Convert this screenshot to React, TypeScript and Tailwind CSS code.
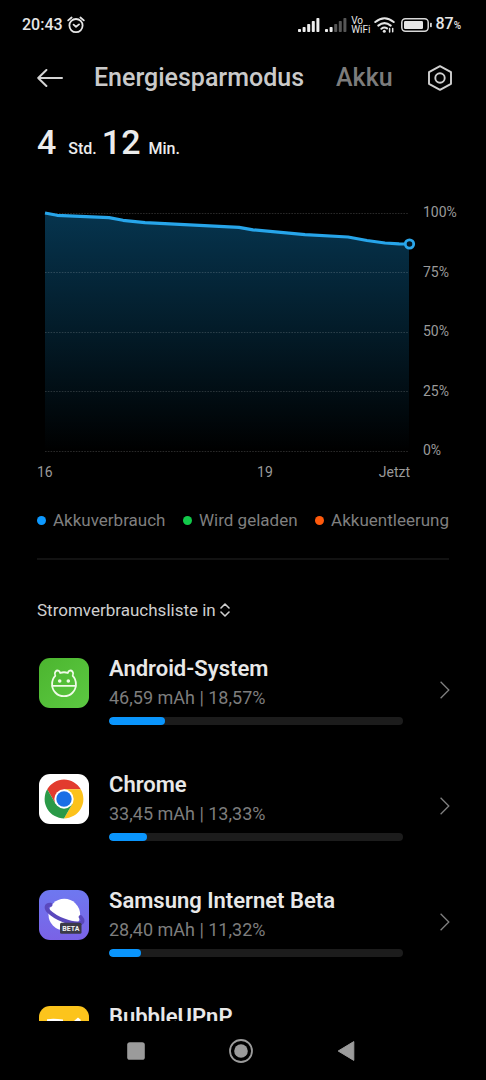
import type { ReactNode } from "react";

type AppUsage = {
  name: string;
  usage?: string;
  share?: number;
  icon: ReactNode;
};

const GRID = [12, 71, 131, 190, 250];
const LINE =
  "M8 12 L20 14.3 L72 16.6 L86 19.3 L108 21.6 L202 26.3 L216 28.8 L268 33.6 L311 36 L330 39.5 L348 42 L362 42.9 L372 43";

function AndroidIcon() {
  return (
    <svg viewBox="0 0 50 50" className="block size-[50px]" aria-hidden="true">
      <defs>
        <linearGradient id="android-bg" x1="0" y1="0" x2="1" y2="1">
          <stop offset="0" stopColor="#4cb52f" />
          <stop offset="1" stopColor="#5cc942" />
        </linearGradient>
      </defs>
      <rect width="50" height="50" rx="11" fill="url(#android-bg)" />
      <g fill="none" stroke="#f0fbe8" strokeWidth="1.8" strokeLinecap="round" strokeLinejoin="round">
        <path d="M16.3 17.8 C14.6 14.6 17.3 11.4 20 13 C20.8 13.5 21 14.5 21.2 15 C23.5 14.1 26.5 14.1 28.8 15 C29 14.5 29.2 13.5 30 13 C32.7 11.4 35.4 14.6 33.7 17.8 C36 20 36.9 22.7 36.9 26.2 C36.9 33 31.7 38.2 25 38.2 C18.3 38.2 13.1 33 13.1 26.2 C13.1 22.7 14 20 16.3 17.8 Z" />
        <path d="M13.3 27.8 H36.7" />
      </g>
      <circle cx="20.7" cy="23" r="1.8" fill="#f0fbe8" />
      <circle cx="29.3" cy="23" r="1.8" fill="#f0fbe8" />
    </svg>
  );
}

function ChromeIcon() {
  return (
    <svg viewBox="0 0 50 50" className="block size-[50px]" aria-hidden="true">
      <rect width="50" height="50" rx="11" fill="#ffffff" />
      <path d="M8.2 15.3 A19.4 19.4 0 0 1 41.8 15.3 L25 15.3 L16.6 29.85 Z" fill="#e23b2e" />
      <path d="M41.8 15.3 A19.4 19.4 0 0 1 25 44.4 L33.4 29.85 L25 15.3 Z" fill="#fcc21b" />
      <path d="M25 44.4 A19.4 19.4 0 0 1 8.2 15.3 L16.6 29.85 L33.4 29.85 Z" fill="#2a9a48" />
      <circle cx="25" cy="25" r="9.7" fill="#ffffff" />
      <circle cx="25" cy="25" r="7.7" fill="#1a6fe6" />
    </svg>
  );
}

function SamsungInternetIcon() {
  return (
    <svg viewBox="0 0 50 50" className="block size-[50px]" aria-hidden="true">
      <defs>
        <linearGradient id="samsung-bg" x1="0" y1="0" x2="0" y2="1">
          <stop offset="0" stopColor="#6e78f0" />
          <stop offset="1" stopColor="#7a62e6" />
        </linearGradient>
      </defs>
      <rect width="50" height="50" rx="11" fill="url(#samsung-bg)" />
      <circle cx="25.3" cy="24.6" r="15.8" fill="#ffffff" />
      <path
        d="M11.5 14.8 C6.8 14.6 6.6 18 9.8 21.4 C17 28.6 32 34.4 40.5 33.4 C44.3 32.8 44.4 30 41.6 27"
        fill="none"
        stroke="#5a48bd"
        strokeWidth="4"
        strokeLinecap="round"
      />
      <rect x="21" y="32.8" width="21.5" height="11" rx="1.5" fill="#3b3a48" />
      <text
        x="31.8"
        y="41"
        textAnchor="middle"
        fontFamily="Roboto, sans-serif"
        fontSize="7"
        fontWeight="700"
        fill="#f2f2f2"
      >
        BETA
      </text>
    </svg>
  );
}

function BubbleIcon() {
  return (
    <svg viewBox="0 0 50 50" className="block size-[50px]" aria-hidden="true">
      <rect width="50" height="50" rx="11" fill="#fcc41c" />
      <path d="M8 13.2 Q15 12 24 13.6 L24 20 L8 20 Z M35 15 L39 11.5 L42 14 L38 20 Z" fill="#ffffff" />
    </svg>
  );
}

const APPS: AppUsage[] = [
  { name: "Android-System", usage: "46,59 mAh | 18,57%", share: 19, icon: <AndroidIcon /> },
  { name: "Chrome", usage: "33,45 mAh | 13,33%", share: 13, icon: <ChromeIcon /> },
  { name: "Samsung Internet Beta", usage: "28,40 mAh | 11,32%", share: 11, icon: <SamsungInternetIcon /> },
  { name: "BubbleUPnP", icon: <BubbleIcon /> },
];

const LEGEND = [
  { label: "Akkuverbrauch", dot: "bg-[#0d99ff]" },
  { label: "Wird geladen", dot: "bg-[#12c94a]" },
  { label: "Akkuentleerung", dot: "bg-[#ff5a0c]" },
];

function Signal({ active }: { active: number }) {
  return (
    <svg viewBox="0 0 22 14" className="h-[14px] w-[22px]" aria-hidden="true">
      {[3, 5, 8, 11, 14].map((h, i) => (
        <rect
          key={h}
          x={i * 4.6}
          y={14 - h}
          width="3"
          height={h}
          rx="0.8"
          fill={i < active ? "#eeeeee" : "#565656"}
        />
      ))}
    </svg>
  );
}

function StatusBar() {
  return (
    <div className="flex h-12 shrink-0 items-center pt-[2px] pr-[25px] pl-[22px] font-medium text-[#e6e6e6]">
      <span className="text-base leading-5">20:43</span>
      <svg
        viewBox="0 0 18 18"
        className="ml-1 size-[18px]"
        fill="none"
        stroke="#e6e6e6"
        strokeWidth="1.8"
        strokeLinecap="round"
        strokeLinejoin="round"
        aria-hidden="true"
      >
        <circle cx="9" cy="9.6" r="6.6" />
        <path d="M1.2 4.4 L4.6 1.5 M16.8 4.4 L13.4 1.5 M6.6 8.6 L9 10.8 L12 8.4" />
      </svg>
      <div className="ml-auto flex items-center">
        <Signal active={5} />
        <span className="w-[5px]" />
        <Signal active={2} />
        <span className="ml-1 flex flex-col text-[10px] leading-[9px] font-normal">
          <span>Vo</span>
          <span>WiFi</span>
        </span>
        <svg
          viewBox="0 0 21 16"
          className="ml-1 h-4 w-[21px]"
          fill="none"
          stroke="#e6e6e6"
          strokeWidth="2"
          strokeLinecap="round"
          aria-hidden="true"
        >
          <path d="M1.3 5 Q10.5 -2.6 19.7 5 M4.3 8.6 Q10.5 3.6 16.7 8.6 M7.4 11.8 Q10.2 9.6 13 11.4" />
          <circle cx="10.3" cy="14.2" r="1.5" fill="#e6e6e6" stroke="none" />
          <path d="M15.6 15 V11.6 M18.7 11.4 V14.8" strokeWidth="1.5" />
        </svg>
        <svg viewBox="0 0 31 14" className="ml-[6px] h-[14px] w-[31px]" aria-hidden="true">
          <rect x="0.8" y="0.8" width="26.4" height="12.4" rx="3.6" fill="none" stroke="#d8d8d8" strokeWidth="1.5" />
          <rect x="3" y="3" width="19" height="8" rx="1.2" fill="#e6e6e6" />
          <rect x="29" y="4.8" width="1.8" height="4.4" rx="0.8" fill="#d8d8d8" />
        </svg>
        <span className="ml-[3px] text-base leading-5">
          87<span className="text-[10px]">%</span>
        </span>
      </div>
    </div>
  );
}

function Header() {
  return (
    <header className="flex h-[60px] shrink-0 items-center pr-[33px] pl-[37px]">
      <button type="button" aria-label="Zurück">
        <svg
          viewBox="0 0 26 18"
          className="block h-[18px] w-[26px]"
          fill="none"
          stroke="#d4d4d4"
          strokeWidth="2"
          strokeLinecap="round"
          strokeLinejoin="round"
          aria-hidden="true"
        >
          <path d="M9.4 1 L1.2 9 L9.4 17 M1.2 9 H25" />
        </svg>
      </button>
      <nav className="ml-[31px] flex items-center gap-[32px] text-[25px] leading-8 font-medium">
        <a href="#energiesparmodus" className="text-[#cacaca]" aria-current="page">
          Energiesparmodus
        </a>
        <a href="#akku" className="text-[#7c7c7c]">
          Akku
        </a>
      </nav>
      <button type="button" aria-label="Einstellungen" className="ml-auto">
        <svg
          viewBox="0 0 26 26"
          className="block size-[26px]"
          fill="none"
          stroke="#d0d0d0"
          strokeWidth="1.9"
          strokeLinejoin="round"
          aria-hidden="true"
        >
          <path d="M13 1.2 L24 7.2 V18.8 L13 24.8 L2 18.8 V7.2 Z" />
          <circle cx="13" cy="13" r="4.7" />
        </svg>
      </button>
    </header>
  );
}

function Chart() {
  return (
    <section className="mt-[33px] pl-[37px] text-sm leading-5 text-[#9a9a9a]" aria-label="Akkustand">
      <div className="flex gap-[6px]">
        <svg viewBox="0 1 380 258" className="block min-w-0 flex-1" aria-hidden="true">
          <defs>
            <linearGradient id="area" x1="0" y1="0" x2="0" y2="1">
              <stop offset="0" stopColor="#06344e" />
              <stop offset="0.5" stopColor="#031b28" />
              <stop offset="1" stopColor="#000000" />
            </linearGradient>
          </defs>
          <path d={`${LINE} L372 250 L8 250 Z`} fill="url(#area)" />
          {GRID.map((y) => (
            <path
              key={y}
              d={`M8 ${y + 0.5} H372`}
              stroke="#ffffff"
              strokeOpacity="0.16"
              strokeWidth="1"
              strokeDasharray="1.6 1.2"
            />
          ))}
          <path d={LINE} fill="none" stroke="#27a5ea" strokeWidth="3.2" strokeLinejoin="round" />
          <circle cx="372.5" cy="43" r="4.2" fill="#03141f" stroke="#2ba6ea" strokeWidth="2.8" />
        </svg>
        <div className="flex w-[63px] shrink-0 flex-col justify-between">
          <span>100%</span>
          <span>75%</span>
          <span>50%</span>
          <span>25%</span>
          <span>0%</span>
        </div>
      </div>
      <div className="mt-[2px] mr-[76px] flex">
        <span className="w-[59%]">16</span>
        <span>19</span>
        <span className="ml-auto">Jetzt</span>
      </div>
    </section>
  );
}

function AppRow({ app }: { app: AppUsage }) {
  return (
    <li>
      <button type="button" className="flex w-full items-start pr-9 pl-[39px] text-left">
        <span className="mt-[3px] shrink-0">{app.icon}</span>
        <span className="ml-5 flex min-w-0 flex-1 flex-col">
          <span className="text-[22px] leading-7 font-semibold text-[#e8e8e8]">{app.name}</span>
          {app.usage && <span className="mt-px text-lg leading-7 text-[#7d7d7d]">{app.usage}</span>}
          {app.share && (
            <span className="mt-[5px] block h-2 overflow-hidden rounded-full bg-[#1c1c1c]">
              <span className="block h-full rounded-full bg-[#0a95fc]" style={{ width: `${app.share}%` }} />
            </span>
          )}
        </span>
        <svg
          viewBox="0 0 10 18"
          className="ml-[37px] h-[18px] w-[10px] shrink-0 self-center"
          fill="none"
          stroke="#808080"
          strokeWidth="1.3"
          aria-hidden="true"
        >
          <path d="M0.6 0.8 L8.8 9 L0.6 17.2" />
        </svg>
      </button>
    </li>
  );
}

function NavBar() {
  return (
    <div className="flex h-[59px] shrink-0 items-center justify-center gap-[81px] bg-black pr-1">
      <button type="button" aria-label="Letzte Apps">
        <svg viewBox="0 0 24 24" className="block size-6" aria-hidden="true">
          <rect x="3.2" y="3.2" width="17.6" height="17.6" rx="2.6" fill="#9b9b9b" />
        </svg>
      </button>
      <button type="button" aria-label="Startseite">
        <svg viewBox="0 0 24 24" className="block size-6" aria-hidden="true">
          <circle cx="12" cy="12" r="11" fill="none" stroke="#9b9b9b" strokeWidth="1.8" />
          <circle cx="12" cy="12" r="6.8" fill="#9b9b9b" />
        </svg>
      </button>
      <button type="button" aria-label="Zurück">
        <svg viewBox="0 0 24 24" className="block size-6" aria-hidden="true">
          <path
            d="M19.8 2.6 V21.4 L4.2 12 Z"
            fill="#9b9b9b"
            stroke="#9b9b9b"
            strokeWidth="1"
            strokeLinejoin="round"
          />
        </svg>
      </button>
    </div>
  );
}

export default function App() {
  return (
    <div className="flex h-dvh flex-col bg-black font-[Roboto,sans-serif]">
      <StatusBar />
      <Header />
      <main className="min-h-0 flex-1 overflow-y-auto [scrollbar-width:none]">
        <h1 className="flex items-baseline pt-[14px] pl-[37px] text-base leading-10 font-medium text-[#ececec]">
          <span className="text-[34px] leading-10">4</span>
          <span className="ml-3">Std.</span>
          <span className="ml-[5px] text-[34px] leading-10">12</span>
          <span className="ml-2">Min.</span>
        </h1>
        <Chart />
        <ul className="mt-[26px] flex justify-between px-[37px] text-[17px] leading-6 text-[#7f7f7f]">
          {LEGEND.map((item) => (
            <li key={item.label} className="flex items-center gap-[7px]">
              <span className={`size-[9px] rounded-full ${item.dot}`} />
              {item.label}
            </li>
          ))}
        </ul>
        <hr className="mx-[37px] mt-[26px] border-t-2 border-[#121212]" />
        <button type="button" className="mt-[38px] ml-[37px] flex items-center gap-1 text-[17px] leading-6 text-[#cfcfcf]">
          Stromverbrauchsliste in
          <svg
            viewBox="0 0 10 14"
            className="h-[14px] w-[10px]"
            fill="none"
            stroke="#cfcfcf"
            strokeWidth="1.6"
            strokeLinecap="round"
            strokeLinejoin="round"
            aria-hidden="true"
          >
            <path d="M1 5 L5 1 L9 5 M1 9 L5 13 L9 9" />
          </svg>
        </button>
        <ul className="mt-[33px] flex flex-col gap-[46px] pb-10">
          {APPS.map((app) => (
            <AppRow key={app.name} app={app} />
          ))}
        </ul>
      </main>
      <NavBar />
    </div>
  );
}
